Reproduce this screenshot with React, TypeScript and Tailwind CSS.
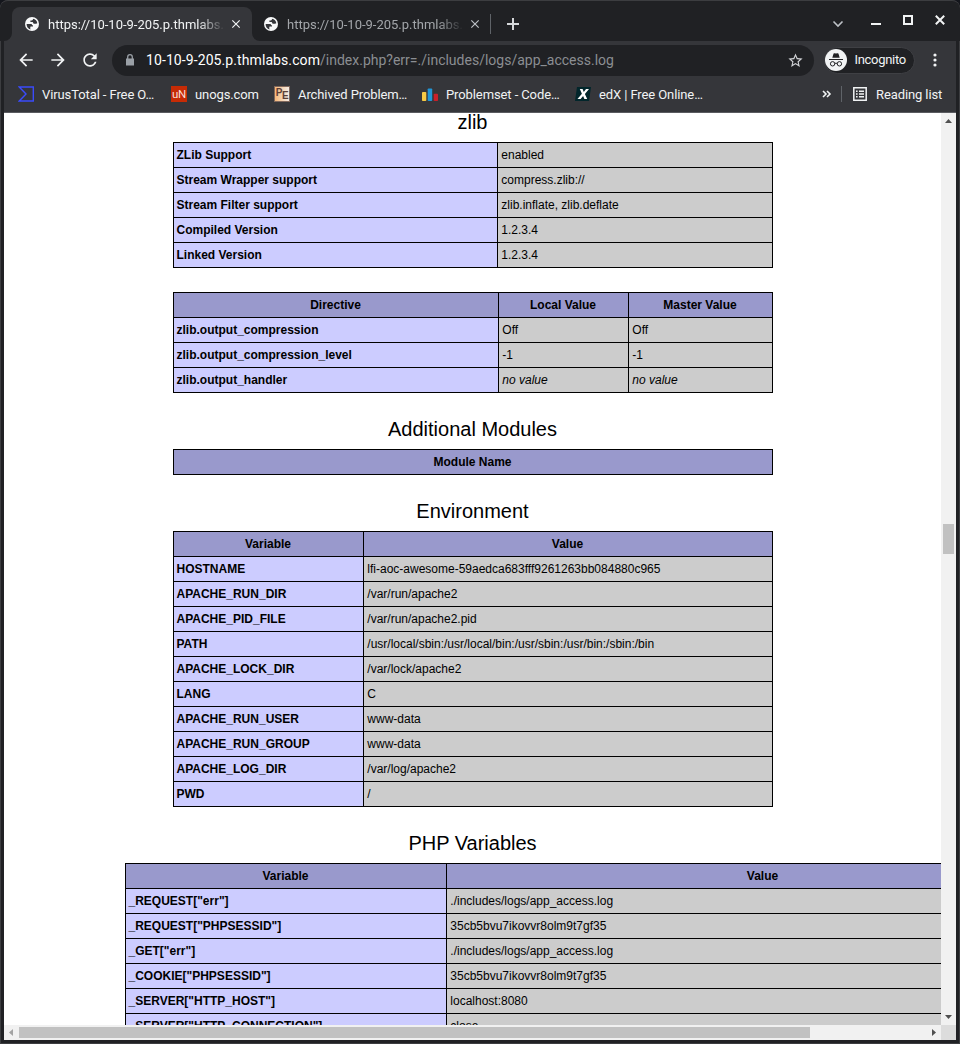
import React from "react";

type Cell = string;

function Icon({ d, size, color = "#f1f3f4" }: { d: string; size: number; color?: string }) {
  return (
    <svg width={size} height={size} viewBox="0 0 24 24" fill={color} className="block shrink-0">
      <path d={d} />
    </svg>
  );
}

const CLOSE = "M19 6.41 17.59 5 12 10.59 6.41 5 5 6.41 10.59 12 5 17.59 6.41 19 12 13.41 17.59 19 19 17.59 13.41 12z";

function Globe() {
  return (
    <svg width="14" height="14" viewBox="0 0 14 14" className="block shrink-0" fill="none">
      <circle cx="7" cy="7" r="7" fill="#f8f9fa" />
      <path d="M1.700 7h4.200c1 0 1.200.600 1.200 1.300H8v1.300H6.200c-.7 0-.9.400-.9 1v1.500l1 .400A5.500 5.500 0 0 1 1.600 7z" fill="#35363a" />
      <path d="M7.900 1.700v.900c0 .8-.5.900-1.200.900H5.400v1.400h1.500c1 0 1.300.500 1.300 1.200 0 .6.500.7 1.100.700h1.600c.6 0 1-.2 1.400-.500A5.400 5.400 0 0 0 7.900 1.700z" fill="#35363a" />
    </svg>
  );
}

function TabTitle({ dim }: { dim?: boolean }) {
  return (
    <div
      className={
        (dim ? "text-[#a3a6aa]" : "text-[#f1f3f4]") +
        " h-4 w-[175px] shrink-0 overflow-hidden whitespace-nowrap pt-px text-[13px] leading-4 [mask-image:linear-gradient(to_right,#000_150px,transparent_177px)]"
      }
    >
      https://10-10-9-205.p.thmlabs.com
    </div>
  );
}

function TabStrip() {
  return (
    <div className="flex h-[41px] shrink-0 rounded-t-lg border-t border-[#3c3d40] bg-[#202124] pl-3">
      <div className="relative mt-1.5 flex h-[34px] w-60 items-center rounded-t-lg bg-[#35363a] pl-[13px]">
        <Globe />
        <div className="ml-[9px]">
          <TabTitle />
        </div>
        <div className="ml-[6px]">
          <Icon d={CLOSE} size={14} />
        </div>
        <svg className="absolute bottom-0 -left-2" width="8" height="8">
          <path d="M8 0v8H0a8 8 0 0 0 8-8z" fill="#35363a" />
        </svg>
        <svg className="absolute bottom-0 -right-2" width="8" height="8">
          <path d="M0 0v8h8a8 8 0 0 1-8-8z" fill="#35363a" />
        </svg>
      </div>
      <div className="mt-1.5 flex h-[34px] w-[239px] shrink-0 items-center pl-3">
        <Globe />
        <div className="ml-[9px]">
          <TabTitle dim />
        </div>
        <div className="ml-[6px]">
          <Icon d={CLOSE} size={14} color="#bdc1c6" />
        </div>
        <div className="ml-[8px] h-5 w-px shrink-0 bg-[#5f6368]" />
      </div>
      <svg width="12" height="12" viewBox="0 0 12 12" className="mt-[17px] ml-4 block shrink-0">
        <path d="M6 0v12M0 6h12" stroke="#d5d7da" strokeWidth="2" />
      </svg>
      <svg width="127" height="20" viewBox="0 0 127 20" className="mt-[9px] ml-[301px] block shrink-0" fill="none">
        <path d="m13.500 11.500 4.500 4.500 4.500-4.500" stroke="#bdc1c6" strokeWidth="1.600" />
        <path d="M51 14h10" stroke="#f1f3f4" strokeWidth="2" />
        <path d="M84 6h8v8h-8z" stroke="#f1f3f4" strokeWidth="2" />
        <path d="m115.800 5.800 8.400 8.400m0-8.400-8.400 8.400" stroke="#f1f3f4" strokeWidth="2" />
      </svg>
    </div>
  );
}

function Toolbar() {
  return (
    <div className="flex h-[38px] shrink-0 items-center pl-3">
      <Icon d="M20 11H7.830l5.590-5.590L12 4l-8 8 8 8 1.410-1.410L7.830 13H20v-2z" size={20} />
      <div className="ml-3">
        <Icon d="m12 4-1.410 1.410L16.170 11H4v2h12.170l-5.580 5.590L12 20l8-8z" size={20} />
      </div>
      <div className="ml-3">
        <Icon
          d="M17.650 6.350C16.200 4.900 14.210 4 12 4c-4.420 0-7.990 3.580-7.990 8s3.570 8 7.990 8c3.730 0 6.840-2.550 7.730-6h-2.080c-.820 2.330-3.040 4-5.650 4-3.310 0-6-2.690-6-6s2.690-6 6-6c1.660 0 3.140.690 4.220 1.780L13 11h7V4l-2.350 2.350z"
          size={20}
        />
      </div>
      <div className="ml-3 flex h-[31px] w-[702px] items-center rounded-full bg-[#202124] pl-[11px]">
        <svg width="14" height="14" viewBox="0 0 14 14" className="block shrink-0" fill="none">
          <path d="M3 5.500h8V12.500H3z" fill="#9aa0a6" />
          <path d="M4.700 6V4a2.300 2.300 0 0 1 4.600 0v2" stroke="#9aa0a6" strokeWidth="1.300" />
        </svg>
        <div className="ml-[9px] w-[641px] shrink-0 text-[14px] leading-5 whitespace-nowrap text-[#8b8e92]">
          <span className="tracking-[0.090px] text-white">10-10-9-205.p.thmlabs.com</span>
          /index.php?err=./includes/logs/app_access.log
        </div>
        <Icon
          d="m22 9.240-7.190-.620L12 2 9.190 8.630 2 9.240l5.460 4.730L5.820 21 12 17.270 18.180 21l-1.630-7.030L22 9.240zM12 15.400l-3.760 2.270 1-4.280-3.320-2.880 4.380-.380L12 6.100l1.710 4.040 4.380.380-3.320 2.880 1 4.280L12 15.400z"
          size={17}
          color="#d0d2d5"
        />
      </div>
      <div className="ml-[10px] flex h-[27px] w-[91px] shrink-0 items-center rounded-full border border-[#3f4044] bg-[#202124]">
        <svg width="22" height="22" viewBox="0 0 22 22" className="block shrink-0" fill="none">
          <circle cx="11" cy="11" r="11" fill="#f1f3f4" />
          <path d="M7.300 8.800 8.500 4.700q.2-.700.900-.500l1.600.400 1.600-.400q.7-.200.9.500l1.200 4.100zM4 10h14v1.100H4z" fill="#202124" />
          <circle cx="7.600" cy="14.800" r="2.200" stroke="#202124" />
          <circle cx="14.400" cy="14.800" r="2.200" stroke="#202124" />
          <path d="M9.800 14.500q1.200-.8 2.400 0" stroke="#202124" />
        </svg>
        <div className="ml-[7.500px] text-[13px] leading-4 tracking-[-0.300px] text-[#f1f3f4]">Incognito</div>
      </div>
      <svg width="4" height="14" viewBox="0 0 4 14" className="ml-[17.500px] block shrink-0" fill="#f1f3f4">
        <circle cx="2" cy="2" r="1.600" />
        <circle cx="2" cy="7" r="1.600" />
        <circle cx="2" cy="12" r="1.600" />
      </svg>
    </div>
  );
}

function Bookmark({ width, icon, children }: { width: string; icon: React.ReactNode; children: React.ReactNode }) {
  return (
    <div className={"flex shrink-0 items-center gap-2 " + width}>
      {icon}
      <span className="pt-0.5 whitespace-nowrap">{children}</span>
    </div>
  );
}

function Bookmarks() {
  return (
    <div className="flex h-[34px] shrink-0 items-center border-b border-[#5a5b60] pb-[3px] pl-[14px] text-[13px] leading-4 tracking-[-0.100px] text-[#f1f3f4]">
      <Bookmark
        width="w-[153px]"
        icon={
          <svg width="16" height="16" viewBox="0 0 16 16" fill="none">
            <path d="M1.300 1h14v14h-14L8 8z" stroke="#3a4bfa" strokeWidth="1.400" />
          </svg>
        }
      >
        VirusTotal - Free O…
      </Bookmark>
      <Bookmark
        width="w-[103px]"
        icon={
          <span className="flex h-4 w-4 items-center justify-center bg-[#c62b05] text-[11.500px] leading-4 tracking-[-0.300px] text-[#f9ded7]">
            uN
          </span>
        }
      >
        unogs.com
      </Bookmark>
      <Bookmark
        width="w-[148px]"
        icon={
          <span className="flex h-4 w-4 items-start justify-center border border-[#80685c] bg-linear-to-r from-[#f6b878] to-[#f4ece4] font-['Liberation_Sans'] text-[10px] leading-[11px] font-bold tracking-[-0.500px] text-[#5d4037]">
            P<span className="pt-[3px]">E</span>
          </span>
        }
      >
        Archived Problem…
      </Bookmark>
      <Bookmark
        width="w-[153px]"
        icon={
          <svg width="16" height="16" viewBox="0 0 16 16">
            <rect x="0" y="6" width="4.300" height="9" rx="0.800" fill="#f6c944" />
            <rect x="5.700" y="2.500" width="4.500" height="12.500" rx="0.800" fill="#2196d6" />
            <rect x="11.700" y="7.700" width="4.300" height="7.300" rx="0.800" fill="#c9202a" />
          </svg>
        }
      >
        Problemset - Code…
      </Bookmark>
      <Bookmark
        width="w-[243px]"
        icon={
          <svg width="16" height="16" viewBox="0 0 16 16">
            <path d="M2 1h14l-2 14H0z" fill="#02262b" />
            <path d="M4.800 3h2.800l1.200 3L11 3h3L9.900 7.900 12.200 13H9.400L8.100 9.900 5.600 13H2.500l4.400-5.200z" fill="#fff" />
          </svg>
        }
      >
        edX | Free Online…
      </Bookmark>
      <svg width="10" height="8" viewBox="0 0 10 8" className="ml-1 block" fill="none">
        <path d="m1 1 3 3-3 3m4-6 3 3-3 3" stroke="#f1f3f4" strokeWidth="1.600" />
      </svg>
      <div className="ml-[9px] h-4 w-px bg-[#5f6368]" />
      <svg width="14" height="14" viewBox="0 0 14 14" className="ml-[11px] block" fill="none">
        <path d="M.8.800h12.400v12.400H.8z" stroke="#f1f3f4" strokeWidth="1.500" />
        <path d="M3 4.200h1.600M3 7h1.600M3 9.800h1.600M6 4.200h5M6 7h5M6 9.800h5" stroke="#f1f3f4" strokeWidth="1.400" />
      </svg>
      <span className="ml-[9px] pt-0.5 whitespace-nowrap">Reading list</span>
    </div>
  );
}

function Table({ cols, head, rows, width }: { cols: string; head?: Cell[]; rows: Cell[][]; width: string }) {
  return (
    <div className={"grid shrink-0 auto-rows-[24px] gap-px border border-black bg-black " + cols + " " + width}>
      {head?.map((h) => (
        <div key={h} className="bg-[#9999cc] pr-px text-center font-bold">
          {h}
        </div>
      ))}
      {rows.map((row, r) =>
        row.map((cell, c) => (
          <div
            key={r + "-" + c}
            className={
              c === 0
                ? "bg-[#ccccff] pl-[2.500px] font-bold whitespace-nowrap"
                : "bg-[#cccccc] pl-[3.300px] whitespace-nowrap"
            }
          >
            {cell === "no value" ? <i>{cell}</i> : cell}
          </div>
        )),
      )}
    </div>
  );
}

function Heading({ children }: { children: string }) {
  return <h2 className="h-6 w-[937px] shrink-0 text-center text-[20px] leading-6">{children}</h2>;
}

function PhpInfo() {
  return (
    <main className="flex h-[912px] w-[937px] shrink-0 flex-col overflow-hidden bg-white font-['Liberation_Sans',Arial,sans-serif] text-[12px] leading-[24px] text-black">
      <div className="-mt-[3px]">
        <Heading>zlib</Heading>
      </div>
      <div className="mt-2 ml-[169px]">
        <Table
          width="w-[600px]"
          cols="grid-cols-[323px_274px]"
          rows={[
            ["ZLib Support", "enabled"],
            ["Stream Wrapper support", "compress.zlib://"],
            ["Stream Filter support", "zlib.inflate, zlib.deflate"],
            ["Compiled Version", "1.2.3.4"],
            ["Linked Version", "1.2.3.4"],
          ]}
        />
      </div>
      <div className="mt-6 ml-[169px]">
        <Table
          width="w-[600px]"
          cols="grid-cols-[324px_129px_143px]"
          head={["Directive", "Local Value", "Master Value"]}
          rows={[
            ["zlib.output_compression", "Off", "Off"],
            ["zlib.output_compression_level", "-1", "-1"],
            ["zlib.output_handler", "no value", "no value"],
          ]}
        />
      </div>
      <div className="mt-6">
        <Heading>Additional Modules</Heading>
      </div>
      <div className="mt-2 ml-[169px]">
        <Table width="w-[600px]" cols="grid-cols-[598px]" head={["Module Name"]} rows={[]} />
      </div>
      <div className="mt-6">
        <Heading>Environment</Heading>
      </div>
      <div className="mt-2 ml-[169px]">
        <Table
          width="w-[600px]"
          cols="grid-cols-[189px_408px]"
          head={["Variable", "Value"]}
          rows={[
            ["HOSTNAME", "lfi-aoc-awesome-59aedca683fff9261263bb084880c965"],
            ["APACHE_RUN_DIR", "/var/run/apache2"],
            ["APACHE_PID_FILE", "/var/run/apache2.pid"],
            ["PATH", "/usr/local/sbin:/usr/local/bin:/usr/sbin:/usr/bin:/sbin:/bin"],
            ["APACHE_LOCK_DIR", "/var/lock/apache2"],
            ["LANG", "C"],
            ["APACHE_RUN_USER", "www-data"],
            ["APACHE_RUN_GROUP", "www-data"],
            ["APACHE_LOG_DIR", "/var/log/apache2"],
            ["PWD", "/"],
          ]}
        />
      </div>
      <div className="mt-6">
        <Heading>PHP Variables</Heading>
      </div>
      <div className="mt-2 ml-[121px]">
        <Table
          width="w-[955px]"
          cols="grid-cols-[320px_632px]"
          head={["Variable", "Value"]}
          rows={[
            ['_REQUEST["err"]', "./includes/logs/app_access.log"],
            ['_REQUEST["PHPSESSID"]', "35cb5bvu7ikovvr8olm9t7gf35"],
            ['_GET["err"]', "./includes/logs/app_access.log"],
            ['_COOKIE["PHPSESSID"]', "35cb5bvu7ikovvr8olm9t7gf35"],
            ['_SERVER["HTTP_HOST"]', "localhost:8080"],
            ['_SERVER["HTTP_CONNECTION"]', "close"],
          ]}
        />
      </div>
    </main>
  );
}

export default function App() {
  return (
    <div className="h-[1044px] w-[960px] overflow-hidden bg-[#14161c]">
      <div className="flex h-[1044px] w-[960px] flex-col overflow-hidden rounded-t-lg bg-[#202124] font-[Roboto,sans-serif] shadow-[inset_0_0_0_1px_#3c3d40]">
        <TabStrip />
        <div className="mx-1 flex h-[72px] shrink-0 flex-col bg-[#35363a]">
          <Toolbar />
          <Bookmarks />
        </div>
        <div className="mx-1 flex h-[912px] shrink-0">
          <PhpInfo />
          <div className="flex w-[15px] flex-col items-center bg-[#f1f1f1]">
            <svg width="15" height="15" className="block">
              <path d="M4 10h7L7.500 6z" fill="#505050" />
            </svg>
            <div className="mt-[396px] h-[30px] w-[11px] bg-[#c1c1c1]" />
            <svg width="15" height="15" className="mt-auto block">
              <path d="M4 5h7L7.500 9z" fill="#505050" />
            </svg>
          </div>
        </div>
        <div className="mx-1 flex h-[15px] shrink-0 items-center bg-[#f1f1f1]">
          <svg width="15" height="15" className="block">
            <path d="M9 4v7L5 7.500z" fill="#a3a3a3" />
          </svg>
          <div className="h-[11px] w-[791px] bg-[#c1c1c1]" />
          <svg width="15" height="15" className="ml-auto block">
            <path d="M6 4v7l4-3.500z" fill="#505050" />
          </svg>
          <div className="h-[15px] w-[15px] bg-[#dcdcdc]" />
        </div>
      </div>
    </div>
  );
}
